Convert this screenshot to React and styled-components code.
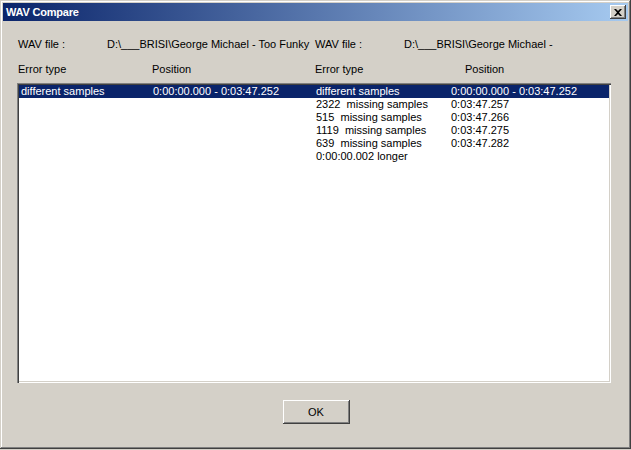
import React from 'react';
import styled, { createGlobalStyle } from 'styled-components';

const GlobalStyle = createGlobalStyle`
  html, body {
    margin: 0;
    padding: 0;
    background: #d4d0c8;
  }
  * {
    box-sizing: border-box;
  }
`;

const Window = styled.div`
  width: 631px;
  height: 449px;
  background: #d4d0c8;
  padding: 3px;
  display: flex;
  flex-direction: column;
  font-family: "Liberation Sans", Arial, sans-serif;
  font-size: 11px;
  color: #000;
  box-shadow:
    inset -1px -1px #404040,
    inset 1px 1px #d4d0c8,
    inset -2px -2px #808080,
    inset 2px 2px #ffffff;
`;

const TitleBar = styled.div`
  height: 18px;
  display: flex;
  align-items: center;
  justify-content: space-between;
  padding: 0 2px 0 3px;
  background: linear-gradient(to right, #0a246a, #a6caf0);
`;

const Title = styled.span`
  color: #fff;
  font-weight: bold;
  font-size: 11px;
  letter-spacing: -0.2px;
`;

const CloseButton = styled.div`
  width: 16px;
  height: 14px;
  background: #d4d0c8;
  display: flex;
  align-items: center;
  justify-content: center;
  box-shadow:
    inset -1px -1px #404040,
    inset 1px 1px #ffffff,
    inset -2px -2px #808080;
`;

const Content = styled.div`
  flex: 1;
  display: flex;
  flex-direction: column;
  padding: 17px 16px 0 14px;
`;

const Pair = styled.div`
  display: grid;
  grid-template-columns: 297px 1fr;
  line-height: 13px;
  height: 13px;
  white-space: nowrap;
  margin-bottom: ${p => p.$gap || 0}px;
`;

const Half = styled.div`
  display: flex;
  overflow: hidden;
  padding-left: ${p => p.$inset || 0}px;
`;

const Label = styled.span`
  width: ${p => p.$w}px;
  flex-shrink: 0;
`;

const ListBox = styled.div`
  margin-top: 7px;
  width: 594px;
  height: 300px;
  background: #fff;
  padding: 2px;
  box-shadow:
    inset 1px 1px #808080,
    inset 2px 2px #404040,
    inset -1px -1px #ffffff,
    inset -2px -2px #d4d0c8;
`;

const Row = styled.div`
  display: grid;
  grid-template-columns: 132px 163px 135px 1fr;
  height: 13px;
  line-height: 13px;
  padding-left: 2px;
  white-space: pre;
  background: ${p => (p.$selected ? '#0a246a' : 'transparent')};
  color: ${p => (p.$selected ? '#fff' : '#000')};
`;

const Footer = styled.div`
  display: flex;
  justify-content: center;
  padding-top: 17px;
`;

const Button = styled.div`
  width: 67px;
  height: 24px;
  display: flex;
  align-items: center;
  justify-content: center;
  margin-left: 3px;
  color: #000;
  box-shadow:
    inset -1px -1px #404040,
    inset 1px 1px #ffffff,
    inset -2px -2px #808080,
    inset 2px 2px #d4d0c8;
`;

const rows = [
  ['2322  missing samples', '0:03:47.257'],
  ['515  missing samples', '0:03:47.266'],
  ['1119  missing samples', '0:03:47.275'],
  ['639  missing samples', '0:03:47.282'],
  ['0:00:00.002 longer', ''],
];

const CloseIcon = () => (
  <svg width="8" height="7" viewBox="0 0 8 7">
    <path d="M0 0h2l2 2 2-2h2L5 3.5 8 7H6L4 5 2 7H0l3-3.5z" fill="#000" />
  </svg>
);

export default function App() {
  return (
    <>
      <GlobalStyle />
      <Window>
        <TitleBar>
          <Title>WAV Compare</Title>
          <CloseButton>
            <CloseIcon />
          </CloseButton>
        </TitleBar>
        <Content>
          <Pair $gap={12}>
            <Half $inset={1}>
              <Label $w={89}>WAV file :</Label>
              <span>D:\___BRISI\George Michael - Too Funky</span>
            </Half>
            <Half $inset={1}>
              <Label $w={89}>WAV file :</Label>
              <span>D:\___BRISI\George Michael -</span>
            </Half>
          </Pair>
          <Pair>
            <Half $inset={1}>
              <Label $w={134}>Error type</Label>
              <span>Position</span>
            </Half>
            <Half $inset={1}>
              <Label $w={150}>Error type</Label>
              <span>Position</span>
            </Half>
          </Pair>
          <ListBox>
            <Row $selected>
              <span>different samples</span>
              <span>0:00:00.000 - 0:03:47.252</span>
              <span>different samples</span>
              <span>0:00:00.000 - 0:03:47.252</span>
            </Row>
            {rows.map(([a, b], i) => (
              <Row key={i}>
                <span />
                <span />
                <span>{a}</span>
                <span>{b}</span>
              </Row>
            ))}
          </ListBox>
          <Footer>
            <Button>OK</Button>
          </Footer>
        </Content>
      </Window>
    </>
  );
}
